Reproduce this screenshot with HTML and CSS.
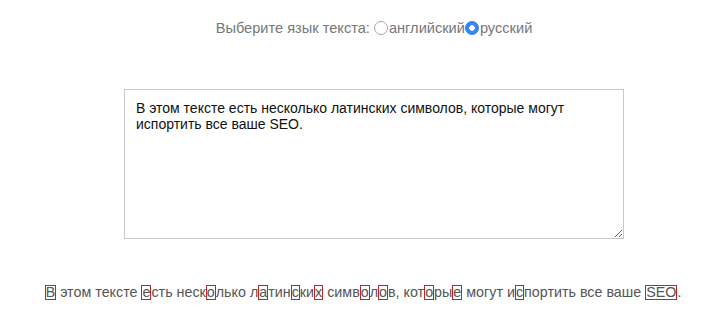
FILE: index.html
```html
<!DOCTYPE html>
<html lang="ru">
<head>
    <meta charset="UTF-8">
    <title>Латиница в тексте</title>
    <link rel="stylesheet" href="styles.css">
</head>
<body>
    <div id="app">
        <div class="lang">
            <span>Выберите язык текста:&nbsp;</span>
            <label><input type="radio" name="lang" value="en">английский</label><label><input type="radio" name="lang" value="ru" checked>русский</label>
        </div>

        <div class="editor">
            <textarea id="source">В этом тексте есть несколько латинских символов, которые могут испортить все ваше SEO.</textarea>
        </div>

        <div id="result" class="result"><mark>B</mark> этом тексте <mark>e</mark>сть неск<mark>o</mark>лько л<mark>a</mark>тин<mark>c</mark>ки<mark>x</mark> симв<mark>o</mark>л<mark>o</mark>в, кот<mark>o</mark>ры<mark>e</mark> могут и<mark>c</mark>портить все ваше <mark>SEO</mark>.</div>
    </div>
</body>
</html>
```

FILE: styles.css
```css
body, html {
    margin: 0;
    padding: 0;
    font-family: "Liberation Sans", Arial, sans-serif;
    background: #fff;
}

#app {
    padding-top: 19px;
}

.lang {
    display: flex;
    justify-content: center;
    align-items: center;
    height: 18px;
    padding-left: 22px;
    font-size: 14.6px;
    color: #777;
}

.lang label {
    display: flex;
    align-items: center;
}

/* mac-like radio */
.lang input {
    appearance: none;
    -webkit-appearance: none;
    margin: 0 1px 0 0;
    width: 14px;
    height: 14px;
    box-sizing: border-box;
    border: 1px solid #a8a8a8;
    border-radius: 50%;
    background: #fff;
}

.lang input:checked {
    border-color: #2c7cf0;
    background: radial-gradient(circle, #fff 0 2.5px, #3885f6 3px);
}

.editor {
    display: flex;
    justify-content: center;
    padding-left: 22px;
    margin-top: 52px;
}

.editor textarea {
    width: 500px;
    height: 150px;
    box-sizing: border-box;
    border: 1px solid #c8c8c8;
    padding: 10px 11px;
    font-family: "Liberation Sans", Arial, sans-serif;
    font-size: 14px;
    line-height: 16px;
    color: #111;
    resize: both;
}

.result {
    text-align: center;
    margin-top: 44px;
    font-size: 14.3px;
    line-height: 18px;
    color: #555;
}

.result mark {
    display: inline-block;
    line-height: 13px;
    background: none;
    color: inherit;
    border: 1px solid #cc1f24;
}
```
